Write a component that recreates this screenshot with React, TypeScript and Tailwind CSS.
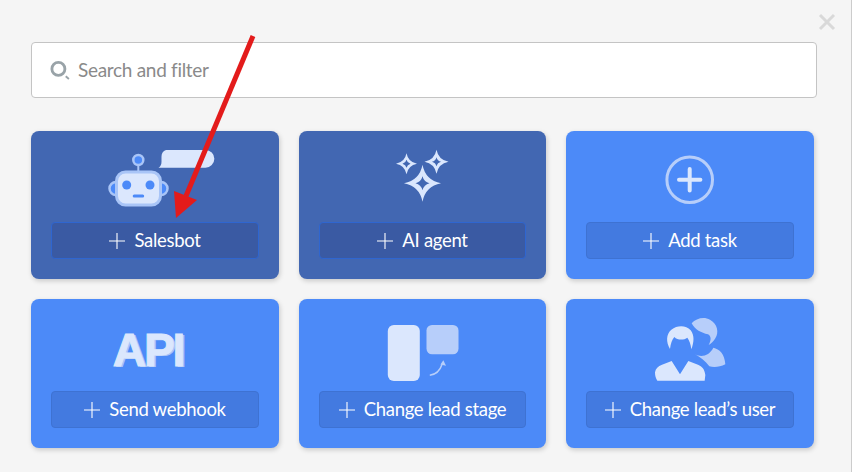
const LIGHT = '#dbe7fd';
const MID = '#b7cefa';
const RING = '#a9c5f7';
const BLUE = '#4c8af8';

const star = (cx: number, cy: number, r: number) => {
  const k = r * 0.16;
  const h = r * 0.38;
  return (
    `M${cx} ${cy - r}Q${cx + k} ${cy - k} ${cx + r} ${cy}Q${cx + k} ${cy + k} ${cx} ${cy + r}` +
    `Q${cx - k} ${cy + k} ${cx - r} ${cy}Q${cx - k} ${cy - k} ${cx} ${cy - r}Z` +
    `M${cx} ${cy - h}Q${cx + h * 0.2} ${cy - h * 0.2} ${cx + h} ${cy}Q${cx + h * 0.2} ${cy + h * 0.2} ${cx} ${cy + h}` +
    `Q${cx - h * 0.2} ${cy + h * 0.2} ${cx - h} ${cy}Q${cx - h * 0.2} ${cy - h * 0.2} ${cx} ${cy - h}Z`
  );
};

const RobotIcon = () => (
  <svg width="120" height="91" viewBox="95 131 120 91">
    <path d="M166 150h39.500a8.800 8.800 0 0 1 0 17.700h-39q-4 0-8 0q3-2 3-6v-5a7 7 0 0 1 4.500-6.700z" fill={LIGHT} />
    <line x1="138.300" y1="165" x2="138.300" y2="172" stroke={RING} strokeWidth="2" />
    <circle cx="138.300" cy="160" r="5" fill={BLUE} stroke={RING} strokeWidth="2.500" />
    <circle cx="116" cy="188.500" r="6.500" fill={BLUE} stroke={RING} strokeWidth="2.500" />
    <circle cx="161" cy="188.500" r="6.500" fill={BLUE} stroke={RING} strokeWidth="2.500" />
    <rect x="116.500" y="172" width="44" height="33" rx="9" fill={LIGHT} stroke={RING} strokeWidth="3" />
    <circle cx="126.700" cy="185" r="4.500" fill={BLUE} />
    <circle cx="150" cy="185" r="4.500" fill={BLUE} />
    <rect x="132.700" y="194.500" width="11.500" height="3" rx="1.500" fill={BLUE} />
  </svg>
);

const SparkleIcon = () => (
  <svg width="120" height="91" viewBox="362.500 131 120 91">
    <path d={star(422, 183.300, 18.500)} fill={LIGHT} fillRule="evenodd" />
    <path d={star(406, 163.700, 10.500)} fill={LIGHT} fillRule="evenodd" />
    <path d={star(436, 161.700, 12)} fill={LIGHT} fillRule="evenodd" />
  </svg>
);

const PlusCircleIcon = () => (
  <svg width="120" height="91" viewBox="630 131 120 91">
    <circle cx="689.700" cy="179.700" r="22.800" fill="none" stroke={MID} strokeWidth="3" />
    <path d="M679 179.700h21.400M689.700 169v21.400" stroke={LIGHT} strokeWidth="4" strokeLinecap="round" />
  </svg>
);

const StageIcon = () => (
  <svg width="120" height="92" viewBox="362.500 299 120 92">
    <rect x="387.300" y="325" width="32" height="56" rx="6" fill={LIGHT} />
    <rect x="426" y="325" width="32" height="29.300" rx="5.500" fill={MID} />
    <path d="M429.300 375.300q9-1 12.300-11" fill="none" stroke={MID} strokeWidth="1.500" />
    <path d="M442.800 360.300l2.700 5.400l-5.600-1.200z" fill={MID} />
  </svg>
);

const UsersIcon = () => (
  <svg width="100" height="92" viewBox="240 12 300 276">
    <path d="M395 85C408 70 432 64 450 74C472 86 478 112 466 130C460 140 454 146 446 150C454 136 454 124 444 118C424 114 405 104 395 85Z" fill={MID} />
    <path d="M405 178C425 188 448 182 460 158C478 162 494 176 496 208C480 216 462 218 448 214C436 198 420 186 405 178Z" fill={MID} />
    <path d="M330 162C318 140 318 118 334 104C352 90 378 90 392 106C404 122 402 142 394 163C392 146 388 136 382 128C372 136 352 136 343 126C336 134 332 146 330 162Z" fill={LIGHT} />
    <path d="M285 232C287 220 294 214 306 209L335 198L360 238L385 198L414 209C426 214 434 222 436 240L434 257H292C287 250 285 242 285 232Z" fill={LIGHT} />
  </svg>
);

const ApiIcon = () => (
  <div className="h-[92px] flex items-start justify-center pt-[25px] pr-[14px] font-['Liberation_Sans',sans-serif] font-bold text-[46px] leading-[52px] tracking-[-2px] text-[#dbe7fd] [-webkit-text-stroke:1px_#dbe7fd] [text-shadow:2px_1px_0_#a9c5f7]">
    API
  </div>
);

interface CardProps {
  label: string;
  icon: React.ReactNode;
  dark?: boolean;
}

const Card = ({ label, icon, dark }: CardProps) => (
  <div
    className={`flex flex-col px-5 pb-5 rounded-lg shadow-[1px_2px_5px_rgba(0,0,0,0.18)] ${
      dark ? 'bg-[#4267b2]' : 'bg-[#4c8af8]'
    }`}
  >
    <div className="flex-1 flex justify-center">{icon}</div>
    <button
      className={`h-[37px] flex items-center justify-center gap-[9px] rounded border text-white text-[18.500px] tracking-[-0.3px] ${
        dark ? 'bg-[#3a5aa3] border-[#2f66d0]' : 'bg-[#437ae0] border-[#3e72d2]'
      }`}
    >
      <svg width="16" height="16" viewBox="0 0 16 16" className="shrink-0">
        <path d="M8 0v16M0 8h16" stroke="white" strokeWidth="1.100" />
      </svg>
      <span>{label}</span>
    </button>
  </div>
);

export default function App() {
  return (
    <div className="relative w-[852px] h-[472px] overflow-hidden bg-[#f5f5f5] border-r border-[#cccccc] pl-[31px] pt-[42px] font-['Lato','Noto_Sans',sans-serif]">
      {/* close */}
      <svg width="18" height="18" viewBox="0 0 18 18" className="absolute left-[818px] top-[13px]">
        <path d="M2 2l14 14M16 2L2 16" stroke="#d9d9d9" strokeWidth="3" />
      </svg>

      {/* search */}
      <div className="w-[786px] h-[56px] flex items-center gap-[7px] pl-[18px] pr-4 bg-white border border-[#c4c4c4] rounded">
        <svg width="21" height="21" viewBox="0 0 20 20" className="shrink-0">
          <circle cx="8" cy="8.500" r="6.200" fill="none" stroke="#99a3a8" strokeWidth="2.700" />
          <path d="M15 15.500l3 2.500" stroke="#99a3a8" strokeWidth="1.800" />
        </svg>
        <input
          placeholder="Search and filter"
          className="flex-1 outline-none text-[19px] tracking-[-0.3px] placeholder:text-[#8a8a8a]"
        />
      </div>

      {/* actions */}
      <div className="mt-[33px] grid grid-cols-[248px_247px_248px] grid-rows-[148px_149px] gap-x-5 gap-y-5">
        <Card label="Salesbot" icon={<RobotIcon />} dark />
        <Card label="AI agent" icon={<SparkleIcon />} dark />
        <Card label="Add task" icon={<PlusCircleIcon />} />
        <Card label="Send webhook" icon={<ApiIcon />} />
        <Card label="Change lead stage" icon={<StageIcon />} />
        <Card label="Change lead’s user" icon={<UsersIcon />} />
      </div>

      {/* annotation arrow */}
      <svg width="852" height="472" viewBox="0 0 852 472" className="absolute left-0 top-0 pointer-events-none">
        <line x1="253" y1="36" x2="186" y2="196" stroke="#e31b1b" strokeWidth="5" />
        <polygon points="176,218 174,191 197,200" fill="#e31b1b" />
      </svg>
    </div>
  );
}
